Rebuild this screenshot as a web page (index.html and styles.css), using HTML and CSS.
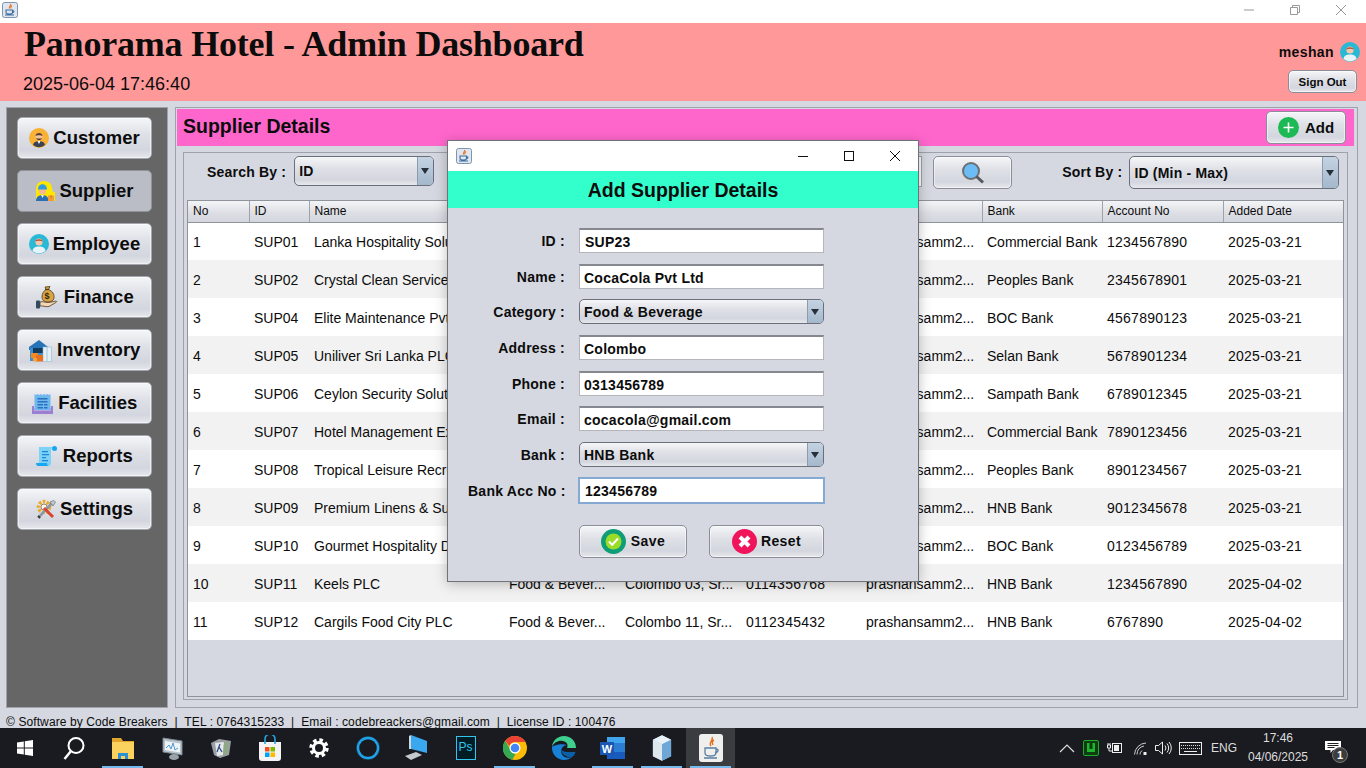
FILE: index.html
```html
<!DOCTYPE html>
<html>
	<head>
		<meta charset="utf-8">
		<title>Panorama Hotel - Admin Dashboard</title>
		<link rel="stylesheet" href="styles.css">
	</head>
	<body>
		<svg class="defs" width="0" height="0">
			<symbol id="java" viewBox="0 0 16 16">
				<rect x="0.5" y="0.5" width="15" height="15" rx="2" fill="#dfe6ef" stroke="#7d95ad"/>
				<path d="M8.5 2c1 1.5-2 2.500-1 4.500M10 3.500c-1 1-2 1.500-1 3" fill="none" stroke="#e8762b" stroke-width="1.200"/>
				<path d="M4 8h6.500v2.500c0 1-1 1.500-3.200 1.500S4 11.500 4 10.500zM10.500 8.500c2 0 2 2-.5 2.500M3 13h9" fill="none" stroke="#3d6e9e" stroke-width="1.100"/>
			</symbol>
			<symbol id="employee" viewBox="0 0 20 20">
				<circle cx="10" cy="10" r="10" fill="#29b8d6"/>
				<path d="M3.500 17c.5-3.500 3-4.500 6.500-4.500s6 1 6.500 4.500a10 10 0 0 1-13 0z" fill="#e8f3f7"/>
				<circle cx="10" cy="8" r="3.600" fill="#f6c9ad"/>
				<path d="M6.300 7.500c0-3 7.400-3 7.400 0-2-1-5.400-1-7.400 0z" fill="#b5533a"/>
			</symbol>
		</svg>

		<div class="titlebar">
			<svg class="java-icon" width="16" height="16"><use href="#java"/></svg>
			<div class="win-controls">
				<svg width="12" height="12" viewBox="0 0 12 12"><path d="M1 6h10" stroke="#999"/></svg>
				<svg width="12" height="12" viewBox="0 0 12 12"><path d="M1.500 3.500h7v7h-7zM3.500 3.500v-2h7v7h-2" fill="none" stroke="#999"/></svg>
				<svg width="12" height="12" viewBox="0 0 12 12"><path d="M1 1l10 10M11 1L1 11" stroke="#999"/></svg>
			</div>
		</div>

		<header class="header">
			<div>
				<h1 class="app-title">Panorama Hotel - Admin Dashboard</h1>
				<div class="clock">2025-06-04 17:46:40</div>
			</div>
			<div class="user-box">
				<div class="user-line">
					<span class="user-name">meshan</span>
					<svg width="20" height="20"><use href="#employee"/></svg>
				</div>
				<button type="button" class="btn signout">Sign Out</button>
			</div>
		</header>

		<div class="main">
			<nav class="sidebar">
				<button type="button" class="btn nav-btn">
					<svg width="20" height="20" viewBox="0 0 20 20">
						<circle cx="10" cy="10" r="10" fill="#f9b233"/>
						<path d="M4 17c.5-3 3-4 6-4s5.500 1 6 4a10 10 0 0 1-12 0z" fill="#3a4254"/>
						<path d="M8.500 13l1.500 3 1.500-3z" fill="#fff"/>
						<circle cx="10" cy="8.500" r="3.500" fill="#f3c3a0"/>
						<path d="M6.500 8c0-4 7-4 7 0-1-1-6-1-7 0zM7 10c1 3 5 3 6 0-1 .8-5 .8-6 0z" fill="#5a3d2e"/>
					</svg>
					Customer
				</button>
				<button type="button" class="btn nav-btn selected">
					<svg width="20" height="20" viewBox="0 0 20 20">
						<path d="M1 15V7a8 7 0 0 1 16 0l1 4h2v9H1z" fill="#ffe600"/>
						<path d="M1 20c0-4 3-6 6.500-6s6 2 6 6z" fill="#2a6fb5"/>
						<path d="M6 14l1.500 3L9 14z" fill="#f5f0d0"/>
						<circle cx="7.500" cy="10" r="3.500" fill="#f3b98f"/>
						<path d="M3 8.500c0-7 9-7 9 0z" fill="#2f9be0"/>
						<rect x="13" y="14.500" width="6" height="5.500" fill="#f39c32"/>
						<path d="M15.500 14.500h1v2h-1z" fill="#b96d15"/>
					</svg>
					Supplier
				</button>
				<button type="button" class="btn nav-btn">
					<svg width="20" height="20"><use href="#employee"/></svg>
					Employee
				</button>
				<button type="button" class="btn nav-btn wide-gap">
					<svg width="23" height="24" viewBox="0 0 23 24">
						<path d="M10 2l5-.5-1.500 3c4 1.500 6 5 5.500 8.500-.3 2.500-3 4-6 4s-6-1.500-6-5c0-3 1.500-6 4-7.500z" fill="#d9a441" stroke="#4b3a1d" stroke-width=".8"/>
						<path d="M10 4.500h4" stroke="#4b3a1d" stroke-width="1.200"/>
						<text x="9.500" y="14" class="bag-mark">$</text>
						<path d="M5 17c3-1 5 .5 8 .5s5-1 8-1.500c1 .2 1 1-1 2l-6 3.500c-3 .8-5-.8-9-.5z" fill="#f5d5b5" stroke="#4b3a1d" stroke-width=".8"/>
						<rect x="1" y="15.500" width="4" height="8" rx="1" fill="#2e4b62"/>
					</svg>
					Finance
				</button>
				<button type="button" class="btn nav-btn wide-gap">
					<svg width="23" height="23" viewBox="0 0 23 23">
						<path d="M0 8l10-7 9 7v3H0z" fill="#2673b8"/>
						<rect x="1" y="9" width="17" height="13" fill="#3d8fd1"/>
						<rect x="4" y="9" width="11" height="5" fill="#123a5c"/>
						<rect x="14" y="8" width="8.500" height="14.500" fill="#e5f0f5" stroke="#8fb7cf" stroke-width=".6"/>
						<path d="M18 8v14.500" stroke="#a5c8da"/>
						<rect x="2" y="14" width="7" height="5" fill="#f08a24"/>
						<rect x="7" y="16" width="7" height="6.500" fill="#e86f1c"/>
						<rect x="4" y="19" width="4" height="3.500" fill="#f5a33c"/>
					</svg>
					Inventory
				</button>
				<button type="button" class="btn nav-btn wide-gap">
					<svg width="21" height="21" viewBox="0 0 21 21">
						<path d="M0 13h2v5h17v-5h2v8H0z" fill="#9b7fd1"/>
						<path d="M2 15h17v3H2z" fill="#b9a5e3"/>
						<path d="M2.500 1l1.600 1 1.600-1 1.600 1 1.600-1 1.600 1 1.600-1 1.600 1 1.600-1 1.600 1 1.600-1v16h-16z" fill="#6fb7ef"/>
						<path d="M5.500 5h10v1.500h-10zM5.500 8h10v1.500h-10zM5.500 11h5.500v1.500H5.500zM12 11h3.500v1.500H12zM5.500 14h5.500v1.500H5.500zM12 14h3.500v1.500H12z" fill="#2a72bd"/>
					</svg>
					Facilities
				</button>
				<button type="button" class="btn nav-btn wide-gap">
					<svg width="21" height="21" viewBox="0 0 21 21">
						<path d="M3 1h14c-1.500 1-2 2-2 4v12c0 2-1 3-3 3H1c2-1 2-2 2-3z" fill="#7fd2f7"/>
						<path d="M0 17h11c0 2 1 3 2 3H2c-1 0-2-1-2-3z" fill="#18a7f2"/>
						<path d="M6 5h6v1.200H6zM6 8h7v1.200H6zM6 11h4v1.200H6zM6 14h6v1.200H6z" fill="#1b87d1"/>
						<circle cx="18.500" cy="2.500" r="2.500" fill="#18a7f2"/>
					</svg>
					Reports
				</button>
				<button type="button" class="btn nav-btn">
					<svg width="20" height="20" viewBox="0 0 20 20">
						<circle cx="8" cy="8" r="5.500" fill="none" stroke="#e8a92a" stroke-width="3.500" stroke-dasharray="2.500 1.500"/>
						<circle cx="8" cy="8" r="3" fill="#f5f5f5" stroke="#7b5a1a" stroke-width=".7"/>
						<path d="M3 18L16 4" stroke="#8d98a4" stroke-width="2.600"/>
						<path d="M14 3l4-1.500L19.500 3 17 7z" fill="#c2ccd4" stroke="#444" stroke-width=".5"/>
						<path d="M8 9l9 9" stroke="#d9432f" stroke-width="3"/>
						<path d="M2 17l2 2" stroke="#333" stroke-width="2"/>
					</svg>
					Settings
				</button>
			</nav>

			<section class="content">
				<div class="page-head">
					<h2 class="page-title">Supplier Details</h2>
					<button type="button" class="btn add-btn">
						<svg width="21" height="21" viewBox="0 0 21 21">
							<circle cx="10.500" cy="10.500" r="10.500" fill="#1db954"/>
							<path d="M10.500 5.500v10M5.500 10.500h10" stroke="#fff" stroke-width="1.600"/>
						</svg>
						Add
					</button>
				</div>

				<div class="inner-panel">
					<div class="toolbar">
						<label class="tool-label search-label">Search By :</label>
						<div class="combo search-combo"><span>ID</span><i class="combo-arrow"></i></div>
						<div class="search-field"></div>
						<button type="button" class="btn search-btn">
							<svg width="24" height="24" viewBox="0 0 24 24">
								<circle cx="10" cy="10" r="8" fill="#6cbcf5" stroke="#6c6f73" stroke-width="2"/>
								<path d="M15.500 15.500l6.500 6" stroke="#55585c" stroke-width="3"/>
							</svg>
						</button>
						<label class="tool-label sort-label">Sort By :</label>
						<div class="combo sort-combo"><span>ID (Min - Max)</span><i class="combo-arrow"></i></div>
					</div>

					<div class="table-box">
						<table class="data-table">
							<colgroup>
								<col class="c-no"><col class="c-id"><col class="c-name"><col class="c-cat"><col class="c-addr">
								<col class="c-phone"><col class="c-email"><col class="c-bank"><col class="c-acc"><col class="c-date">
							</colgroup>
							<thead>
								<tr><th>No</th><th>ID</th><th>Name</th><th>Category</th><th>Address</th><th>Phone</th><th>Email</th><th>Bank</th><th>Account No</th><th>Added Date</th></tr>
							</thead>
							<tbody>
								<tr><td>1</td><td>SUP01</td><td>Lanka Hospitality Solutions</td><td></td><td></td><td></td><td>prashansamm2...</td><td>Commercial Bank</td><td>1234567890</td><td>2025-03-21</td></tr>
								<tr><td>2</td><td>SUP02</td><td>Crystal Clean Services</td><td></td><td></td><td></td><td>prashansamm2...</td><td>Peoples Bank</td><td>2345678901</td><td>2025-03-21</td></tr>
								<tr><td>3</td><td>SUP04</td><td>Elite Maintenance Pvt</td><td></td><td></td><td></td><td>prashansamm2...</td><td>BOC Bank</td><td>4567890123</td><td>2025-03-21</td></tr>
								<tr><td>4</td><td>SUP05</td><td>Uniliver Sri Lanka PLC</td><td></td><td></td><td></td><td>prashansamm2...</td><td>Selan Bank</td><td>5678901234</td><td>2025-03-21</td></tr>
								<tr><td>5</td><td>SUP06</td><td>Ceylon Security Solutions</td><td></td><td></td><td></td><td>prashansamm2...</td><td>Sampath Bank</td><td>6789012345</td><td>2025-03-21</td></tr>
								<tr><td>6</td><td>SUP07</td><td>Hotel Management Experts</td><td></td><td></td><td></td><td>prashansamm2...</td><td>Commercial Bank</td><td>7890123456</td><td>2025-03-21</td></tr>
								<tr><td>7</td><td>SUP08</td><td>Tropical Leisure Recreation</td><td></td><td></td><td></td><td>prashansamm2...</td><td>Peoples Bank</td><td>8901234567</td><td>2025-03-21</td></tr>
								<tr><td>8</td><td>SUP09</td><td>Premium Linens &amp; Supplies</td><td></td><td></td><td></td><td>prashansamm2...</td><td>HNB Bank</td><td>9012345678</td><td>2025-03-21</td></tr>
								<tr><td>9</td><td>SUP10</td><td>Gourmet Hospitality Di...</td><td></td><td></td><td></td><td>prashansamm2...</td><td>BOC Bank</td><td>0123456789</td><td>2025-03-21</td></tr>
								<tr><td>10</td><td>SUP11</td><td>Keels PLC</td><td>Food &amp; Bever...</td><td>Colombo 03, Sr...</td><td>0114356768</td><td>prashansamm2...</td><td>HNB Bank</td><td>1234567890</td><td>2025-04-02</td></tr>
								<tr><td>11</td><td>SUP12</td><td>Cargils Food City PLC</td><td>Food &amp; Bever...</td><td>Colombo 11, Sr...</td><td>0112345432</td><td>prashansamm2...</td><td>HNB Bank</td><td>6767890</td><td>2025-04-02</td></tr>
							</tbody>
						</table>
					</div>
				</div>
			</section>
		</div>

		<footer class="footer">© Software by Code Breakers &nbsp;|&nbsp; TEL : 0764315233 &nbsp;|&nbsp; Email : codebreackers@gmail.com &nbsp;|&nbsp; License ID : 100476</footer>

		<div class="taskbar">
			<div class="task-apps">
				<span class="task-item"><svg width="18" height="18" viewBox="0 0 18 18"><path d="M1 3.500l6.800-1v6H1zM8.800 2.300L17 1v7.500H8.800zM1 9.500h6.800v6L1 14.500zM8.800 9.500H17V17l-8.200-1.200z" fill="#fff"/></svg></span>
				<span class="task-item"><svg width="24" height="24" viewBox="0 0 24 24"><circle cx="14" cy="9.500" r="7.500" fill="none" stroke="#fff" stroke-width="2"/><path d="M9 15l-6.500 8" stroke="#fff" stroke-width="2.400"/></svg></span>
				<span class="task-item open"><svg width="22" height="24" viewBox="0 0 22 24"><path d="M0 2h9l2 3h11v18H0z" fill="#e0a52a"/><path d="M0 6h22v17H0z" fill="#fbd25e"/><path d="M6 23v-6h10v6h-3v-3H9v3z" fill="#2d8fd5"/></svg></span>
				<span class="task-item"><svg width="24" height="26" viewBox="0 0 24 26"><path d="M3 3l19 3v14L3 17z" fill="#b9c3cc" stroke="#7a848c"/><path d="M5 6l15 2.500v9L5 15z" fill="#eef3f6"/><path d="M6 13l3-3 2 4 2-6 2 7 3-2" fill="none" stroke="#3f8fd0" stroke-width=".9"/><ellipse cx="14" cy="22" rx="5" ry="3" fill="#9aa3aa"/></svg></span>
				<span class="task-item"><svg width="22" height="22" viewBox="0 0 22 22"><path d="M1 6l8-4 12 2-2 14-9 3-6-3z" fill="#9a9fa6"/><path d="M5 6l9-1-1 13-6 1z" fill="#e6e9eb"/><path d="M7 15l3-8M9 10l3 5" stroke="#2d4d8a" stroke-width="1.300"/><path d="M14 5l5 0-1.500 12-4.500 1z" fill="#8fa884"/></svg></span>
				<span class="task-item"><svg width="24" height="26" viewBox="0 0 24 26"><path d="M1 7h22v16a3 3 0 0 1-3 3H4a3 3 0 0 1-3-3z" fill="#f4f4f4"/><path d="M7 9V4a5 5 0 0 1 10 0v5" fill="none" stroke="#21a5e0" stroke-width="1.600"/><rect x="7" y="12" width="4.500" height="4.500" fill="#f25022"/><rect x="12.500" y="12" width="4.500" height="4.500" fill="#7fba00"/><rect x="7" y="17.500" width="4.500" height="4.500" fill="#00a4ef"/><rect x="12.500" y="17.500" width="4.500" height="4.500" fill="#ffb900"/></svg></span>
				<span class="task-item"><svg width="20" height="20" viewBox="0 0 20 20"><circle cx="10" cy="10" r="5.500" fill="none" stroke="#fff" stroke-width="3"/><circle cx="10" cy="10" r="8" fill="none" stroke="#fff" stroke-width="3.400" stroke-dasharray="3.500 2.800"/></svg></span>
				<span class="task-item"><svg width="24" height="24" viewBox="0 0 24 24"><circle cx="12" cy="12" r="10" fill="none" stroke="#1fa3e8" stroke-width="2.400"/><circle cx="12" cy="12" r="11.500" fill="none" stroke="#1fa3e8" stroke-width=".6" opacity=".5"/></svg></span>
				<span class="task-item"><svg width="24" height="28" viewBox="0 0 24 28"><path d="M6 1l16 6v12L6 15z" fill="#3ba7ee"/><path d="M6 1l-2 1v13l2 0z" fill="#cfd6dc"/><path d="M0 22l11-4 6 3-11 5z" fill="#c4cace"/></svg></span>
				<span class="task-item"><span class="ps-icon">Ps</span></span>
				<span class="task-item open"><svg width="24" height="24" viewBox="0 0 24 24"><circle cx="12" cy="12" r="12" fill="#fbbc05"/><path d="M12 0a12 12 0 0 1 10.400 6H12a6 6 0 0 0-5.700 4L2.200 4.700A12 12 0 0 1 12 0z" fill="#ea4335"/><path d="M2.200 4.700L7.500 14a6 6 0 0 0 5 4l-3.300 5.700A12 12 0 0 1 2.200 4.700z" fill="#34a853"/><circle cx="12" cy="12" r="5.500" fill="#fff"/><circle cx="12" cy="12" r="4.300" fill="#4285f4"/></svg></span>
				<span class="task-item"><svg width="24" height="24" viewBox="0 0 24 24"><path d="M12 0C5 0 .5 5 0 11c2-5 7-7 11-6 4 1 5.500 4 4 7h9C24 5 19 0 12 0z" fill="#3fcf8e"/><path d="M0 11c-.5 7 5 13 12 13 3 0 6-1 8-3-4 1.500-9 .5-10.500-3.500C8 13.500 11 9 15 9c-5-2-13 0-15 2z" fill="#1681d7"/><path d="M9 13c0 6 7 9 11 8 2-1 3-3 3.500-5H16c-1 0-7-.5-7-3z" fill="#0b5fa8"/></svg></span>
				<span class="task-item open"><svg width="26" height="24" viewBox="0 0 26 24"><rect x="7" y="1" width="18" height="22" fill="#2b7cd3"/><rect x="7" y="1" width="18" height="6" fill="#41a5ee"/><rect x="7" y="16" width="18" height="7" fill="#185abd"/><rect x="0" y="6" width="14" height="13" fill="#1a57b3"/><text x="7" y="16.500" class="word-mark">W</text></svg></span>
				<span class="task-item open"><svg width="20" height="28" viewBox="0 0 22 30"><path d="M11 1l10 5v18l-10 5-10-5V6z" fill="#a9cdec"/><path d="M11 1l10 5-10 5L1 6z" fill="#e8f1f7"/><path d="M11 11v18L1 24V6z" fill="#dce7ee"/><path d="M11 11l10-5v18l-10 5z" fill="#6ea7d6"/></svg></span>
				<span class="task-item active open"><svg width="24" height="28" viewBox="0 0 24 28"><rect width="24" height="28" rx="3" fill="#eff0ee"/><path d="M13 3c2 3-4 5-1 9M15 6c-2 1-2 3-1 5" fill="none" stroke="#e76f1e" stroke-width="1.400"/><path d="M6 14h11v5c0 2-2 3-5.500 3S6 21 6 19zM17 15c3 0 3 3-1 4M5 24h13" fill="none" stroke="#5b7fa0" stroke-width="1.300"/></svg></span>
			</div>
			<div class="tray">
				<svg width="16" height="9" viewBox="0 0 16 9"><path d="M1 8l7-7 7 7" fill="none" stroke="#ddd" stroke-width="1.200"/></svg>
				<svg class="tray-green" width="16" height="16" viewBox="0 0 16 16"><rect x=".5" y=".5" width="15" height="15" rx="1.500" fill="#0d3d10" stroke="#1cae2a"/><path d="M4 3v9h8V3h-2.500v6h-3V3z" fill="#1fb52c"/></svg>
				<svg class="tray-power" width="16" height="12" viewBox="0 0 16 12"><path d="M.5 3h3v3h-3zM2 6v3h3M1 1v2M3 1v2" fill="none" stroke="#eee"/><rect x="5.500" y="1.500" width="9" height="9" fill="none" stroke="#eee"/><rect x="7" y="3" width="5" height="6" fill="#eee"/></svg>
				<svg class="tray-wifi" width="13" height="13" viewBox="0 0 13 13"><path d="M.5 12.500A12 12 0 0 1 12 1M3 12.500A9 9 0 0 1 10 4M6 12.500a5 5 0 0 1 2-4" fill="none" stroke="#ccc"/><rect x="9.500" y="10" width="3" height="3" fill="#eee"/></svg>
				<svg class="tray-sound" width="17" height="14" viewBox="0 0 17 14"><path d="M.5 4.500h3L7.500 1v12l-4-3.500h-3z" fill="none" stroke="#eee"/><path d="M10 4.500a4 4 0 0 1 0 5M12 2.500a7 7 0 0 1 0 9M14 1a9 9 0 0 1 0 12" fill="none" stroke="#eee"/></svg>
				<svg class="tray-keys" width="23" height="13" viewBox="0 0 23 13"><rect x=".5" y=".5" width="22" height="12" fill="none" stroke="#eee"/><path d="M2 3.500h19M2 6.500h19" stroke="#ddd" stroke-dasharray="1 1"/><path d="M5 9.500h13" stroke="#eee"/></svg>
				<span class="tray-lang">ENG</span>
				<div class="tray-clock"><div>17:46</div><div>04/06/2025</div></div>
				<span class="notify">
					<svg width="16" height="12" viewBox="0 0 16 12"><path d="M0 0h16v9H8l-2.500 3V9H0z" fill="#fff"/><path d="M2.500 2.500h11M2.500 4.500h11M2.500 6.500h7" stroke="#222"/></svg>
					<span class="notify-badge">1</span>
				</span>
			</div>
		</div>

		<!-- add supplier window -->
		<div class="dialog">
			<div class="dialog-bar">
				<svg class="dialog-icon" width="16" height="16"><use href="#java"/></svg>
				<div class="dialog-controls">
					<svg width="12" height="12" viewBox="0 0 12 12"><path d="M1 6.500h10" stroke="#111"/></svg>
					<svg width="12" height="12" viewBox="0 0 12 12"><rect x="1.500" y="1.500" width="9" height="9" fill="none" stroke="#111"/></svg>
					<svg width="12" height="12" viewBox="0 0 12 12"><path d="M1 1l10 10M11 1L1 11" stroke="#111"/></svg>
				</div>
			</div>
			<h3 class="dialog-title">Add Supplier Details</h3>
			<div class="form">
				<label class="form-label">ID :</label>
				<div class="input input-alt">SUP23</div>
				<label class="form-label">Name :</label>
				<div class="input">CocaCola Pvt Ltd</div>
				<label class="form-label">Category :</label>
				<div class="combo form-combo"><span>Food &amp; Beverage</span><i class="combo-arrow"></i></div>
				<label class="form-label">Address :</label>
				<div class="input">Colombo</div>
				<label class="form-label">Phone :</label>
				<div class="input">0313456789</div>
				<label class="form-label">Email :</label>
				<div class="input">cocacola@gmail.com</div>
				<label class="form-label">Bank :</label>
				<div class="combo form-combo"><span>HNB Bank</span><i class="combo-arrow"></i></div>
				<label class="form-label">Bank Acc No :</label>
				<div class="input focused">123456789</div>
			</div>
			<div class="form-actions">
				<button type="button" class="btn save-btn">
					<svg width="25" height="25" viewBox="0 0 25 25">
						<circle cx="12.500" cy="12.500" r="12.500" fill="#0f9d78"/>
						<circle cx="12.500" cy="12.500" r="8" fill="#9bdc28"/>
						<path d="M8 12.500l3.200 3.200L17 9.500" fill="none" stroke="#fff" stroke-width="2"/>
					</svg>
					Save
				</button>
				<button type="button" class="btn reset-btn">
					<svg width="25" height="25" viewBox="0 0 25 25">
						<circle cx="12.500" cy="12.500" r="12.500" fill="#f0145a"/>
						<path d="M8 8l9 9M17 8l-9 9" stroke="#fff" stroke-width="4"/>
					</svg>
					Reset
				</button>
			</div>
		</div>
	</body>
</html>
```

FILE: styles.css
```css
* {
	box-sizing: border-box;
}

html,
body {
	margin: 0;
	height: 100%;
}

body {
	width: 1366px;
	height: 768px;
	overflow: hidden;
	position: relative;
	display: flex;
	flex-direction: column;
	background-color: #d5d8e0;
	font-family: "Liberation Sans", Arial, sans-serif;
	color: #0c0c0c;
}

.defs {
	position: absolute;
}

.titlebar {
	height: 23px;
	flex: none;
	background-color: #fff;
	display: flex;
	justify-content: space-between;
	align-items: center;
	padding: 0 19px 3px 2px;
}

.win-controls {
	display: flex;
	gap: 34px;
}

.header {
	height: 78px;
	flex: none;
	background-color: #ff9999;
	display: flex;
	justify-content: space-between;
	padding: 0 6px 0 24px;
}

.app-title {
	margin: 1px 0 0 0;
	height: 41px;
	font-family: "Liberation Serif", "Times New Roman", serif;
	font-size: 36px;
	line-height: 41px;
	font-weight: bold;
	letter-spacing: -0.2px;
	white-space: nowrap;
}

.clock {
	margin: 9px 0 0 -1px;
	font-size: 18px;
	line-height: 21px;
}

.user-box {
	display: flex;
	flex-direction: column;
	align-items: flex-end;
	padding-top: 19px;
}

.user-line {
	display: flex;
	align-items: center;
	gap: 6px;
	height: 20px;
}

.user-name {
	font-size: 14px;
	font-weight: bold;
	letter-spacing: 0.4px;
}

/* nimbus look for every button */
.btn {
	font-family: inherit;
	font-weight: bold;
	color: #0c0c0c;
	display: flex;
	align-items: center;
	justify-content: center;
	padding: 0;
	border: 1px solid #8a8e98;
	border-radius: 5px;
	background: linear-gradient(#f5f6f8 0%, #dfe1e7 40%, #d3d6de 80%, #e6e8ec 100%);
	box-shadow: inset 0 0 0 1px rgba(255, 255, 255, 0.5);
}

.signout {
	margin: 8px 3px 0 0;
	width: 69px;
	height: 23px;
	font-size: 11.500px;
}

.main {
	flex: none;
	display: flex;
	gap: 7px;
	height: 608px;
	padding: 6px 8px 0 6px;
}

.sidebar {
	width: 162px;
	height: 601px;
	flex: none;
	background-color: #666;
	border: 1px solid #4c4c4c;
	outline: 1px solid #9ea2aa;
	outline-offset: -1px;
	padding: 9px 15px 0 10px;
	display: flex;
	flex-direction: column;
	gap: 11px;
}

.nav-btn {
	width: 135px;
	height: 42px;
	flex: none;
	font-size: 18.500px;
	gap: 4px;
	border-color: #a3a6ae;
}

.nav-btn.wide-gap {
	gap: 5.500px;
}

.nav-btn.selected {
	background: #babdc6;
	border-color: #8f929b;
	box-shadow: none;
}

.bag-mark {
	font-size: 9px;
	font-weight: bold;
	fill: #33240d;
}

.content {
	flex: 1;
	height: 601px;
	border: 1px solid #9ea2aa;
	padding: 1px;
	display: flex;
	flex-direction: column;
}

.page-head {
	height: 37px;
	flex: none;
	width: 1177px;
	background-color: #ff66cc;
	display: flex;
	justify-content: space-between;
	align-items: center;
	padding: 0 8px 0 6px;
}

.page-title {
	margin: 0 0 2px 0;
	font-size: 19.500px;
	font-weight: bold;
}

.add-btn {
	width: 80px;
	height: 33px;
	font-size: 15px;
	gap: 6px;
}

.inner-panel {
	margin: 6px 0 0 6px;
	width: 1165px;
	height: 548px;
	border: 1px solid #9ea2aa;
	padding: 0 3px 0 3px;
	display: flex;
	flex-direction: column;
}

.toolbar {
	height: 47px;
	flex: none;
	display: flex;
	align-items: flex-start;
	padding-top: 3px;
}

.tool-label {
	margin-top: 8px;
	font-size: 14px;
	font-weight: bold;
	letter-spacing: 0.2px;
}

.search-label {
	margin-left: 20px;
}

.combo {
	display: flex;
	justify-content: space-between;
	align-items: stretch;
	border: 1px solid #6a6f7b;
	border-radius: 5px;
	overflow: hidden;
	font-size: 14px;
	font-weight: bold;
	letter-spacing: 0.2px;
	background: linear-gradient(#f5f6f8 0%, #dfe1e7 40%, #d3d6de 80%, #e6e8ec 100%);
}

.combo span {
	padding-left: 4px;
	align-self: center;
}

.combo-arrow {
	width: 16px;
	position: relative;
	background: linear-gradient(#c4d3e2, #a4b8cc);
	border-left: 1px solid #8c9cad;
}

.combo-arrow::after {
	content: "";
	position: absolute;
	left: 3px;
	top: 50%;
	margin-top: -3px;
	border-left: 4px solid transparent;
	border-right: 4px solid transparent;
	border-top: 6px solid #26303a;
}

.search-combo {
	margin-left: 8px;
	width: 140px;
	height: 30px;
}

.search-field {
	margin-left: 20px;
	width: 468px;
	height: 31px;
	border: 1px solid #9ea2aa;
	background-color: #fff;
}

.search-btn {
	margin-left: 11px;
	width: 79px;
	height: 33px;
}

.sort-label {
	margin-left: 50px;
}

.sort-combo {
	margin-left: 7px;
	width: 210px;
	height: 33px;
}

.table-box {
	width: 1157px;
	height: 497px;
	border: 1px solid #8f939c;
	overflow: hidden;
}

.data-table {
	border-collapse: collapse;
	table-layout: fixed;
	width: 1155px;
	font-size: 14px;
}

.c-no { width: 61px; }
.c-id { width: 60px; }
.c-name { width: 195px; }
.c-cat { width: 116px; }
.c-addr { width: 121px; }
.c-phone { width: 120px; }
.c-email { width: 121px; }
.c-bank { width: 120px; }
.c-acc { width: 121px; }
.c-date { width: 120px; }

.data-table th {
	height: 21px;
	padding: 0 0 0 5px;
	text-align: left;
	font-size: 12px;
	font-weight: normal;
	background: linear-gradient(#f3f4f6 0%, #dcdee4 60%, #d3d6dd 100%);
	border-right: 1px solid #9ea2aa;
	border-bottom: 1px solid #8f939c;
}

.data-table td {
	height: 38px;
	padding: 2px 0 0 5px;
	white-space: nowrap;
	overflow: hidden;
	background-color: #fff;
}

/* the number columns run a bit wider in the original */
.data-table td:nth-child(6),
.data-table td:nth-child(9),
.data-table td:nth-child(10) {
	letter-spacing: 0.25px;
}

.data-table tbody tr:nth-child(even) td {
	background-color: #f2f2f2;
}

.footer {
	height: 19px;
	flex: none;
	padding: 7px 0 0 6px;
	font-size: 12px;
	line-height: 12px;
	letter-spacing: 0.1px;
	white-space: nowrap;
}

.taskbar {
	height: 40px;
	flex: none;
	background-color: #1a1b21;
	display: flex;
	justify-content: space-between;
	color: #ddd;
}

.task-apps {
	display: flex;
}

.task-item {
	width: 49px;
	height: 40px;
	display: flex;
	align-items: center;
	justify-content: center;
	position: relative;
}

.task-item.open::after {
	content: "";
	position: absolute;
	left: 4px;
	right: 4px;
	bottom: 0;
	height: 2px;
	background-color: #76b9ed;
}

.task-item.active {
	background-color: #3b3c40;
}

.ps-icon {
	width: 20px;
	height: 24px;
	border: 1.500px solid #31c5f0;
	background-color: #001d26;
	color: #31c5f0;
	font-size: 12px;
	line-height: 21px;
	text-align: center;
}

.word-mark {
	font-size: 11px;
	font-weight: bold;
	fill: #fff;
	text-anchor: middle;
}

.tray {
	display: flex;
	align-items: center;
	padding-right: 17px;
}

.tray-green {
	margin-left: 8px;
}

.tray-power {
	margin-left: 8px;
}

.tray-wifi {
	margin-left: 11px;
}

.tray-sound {
	margin-left: 8px;
}

.tray-keys {
	margin-left: 7px;
}

.tray-lang {
	margin-left: 9px;
	font-size: 12px;
}

.tray-clock {
	width: 66px;
	margin-left: 8px;
	font-size: 12px;
	line-height: 19px;
	text-align: center;
}

.notify {
	margin-left: 14px;
	position: relative;
	width: 24px;
	height: 24px;
	display: block;
}

.notify svg {
	position: absolute;
	left: 0;
	top: 5px;
}

.notify-badge {
	position: absolute;
	left: 7px;
	top: 11px;
	width: 16px;
	height: 16px;
	border-radius: 50%;
	background-color: #3c3c3c;
	border: 1px solid #777;
	color: #fff;
	font-size: 11px;
	font-weight: bold;
	line-height: 14px;
	text-align: center;
}

/* the dialog floats on top of the main window */
.dialog {
	position: absolute;
	left: 447px;
	top: 140px;
	width: 472px;
	height: 442px;
	border: 1px solid #6f7278;
	background-color: #d5d8e0;
	box-shadow: 0 2px 12px rgba(0, 0, 0, 0.25);
}

.dialog-bar {
	height: 30px;
	background-color: #fff;
	display: flex;
	justify-content: space-between;
	align-items: center;
	padding: 0 17px 0 8px;
}

.dialog-controls {
	display: flex;
	gap: 34px;
}

.dialog-title {
	margin: 0;
	height: 37px;
	background-color: #33ffcc;
	font-size: 19.500px;
	line-height: 38px;
	text-align: center;
	font-weight: bold;
}

.form {
	margin: 20px 0 0 20px;
	display: grid;
	grid-template-columns: 97px 245px;
	grid-auto-rows: 25px;
	column-gap: 14px;
	row-gap: 10.700px;
	align-items: center;
}

.form-label {
	padding-top: 1px;
	font-size: 14px;
	font-weight: bold;
	text-align: right;
	white-space: nowrap;
	letter-spacing: 0.25px;
}

.input {
	height: 25px;
	padding-left: 4px;
	background-color: #fff;
	border: 1px solid #b4b6bc;
	border-top: 2px solid #85888f;
	font-size: 14px;
	font-weight: bold;
	line-height: 24px;
	letter-spacing: 0.25px;
}

.input-alt {
	padding-left: 5px;
}

.input.focused {
	height: 27px;
	margin: -1px;
	width: 247px;
	padding-left: 5px;
	border: 2px solid #84a9d3;
	line-height: 25px;
}

.form-combo {
	height: 25px;
	letter-spacing: 0.25px;
}

.form-combo span {
	padding-top: 1px;
}

.form-actions {
	margin: 22px 0 0 131px;
	display: flex;
	gap: 22px;
}

.save-btn,
.reset-btn {
	height: 33px;
	font-size: 14px;
	letter-spacing: 0.4px;
	gap: 5px;
}

.save-btn {
	width: 108px;
}

.reset-btn {
	width: 115px;
	gap: 4px;
}
```
